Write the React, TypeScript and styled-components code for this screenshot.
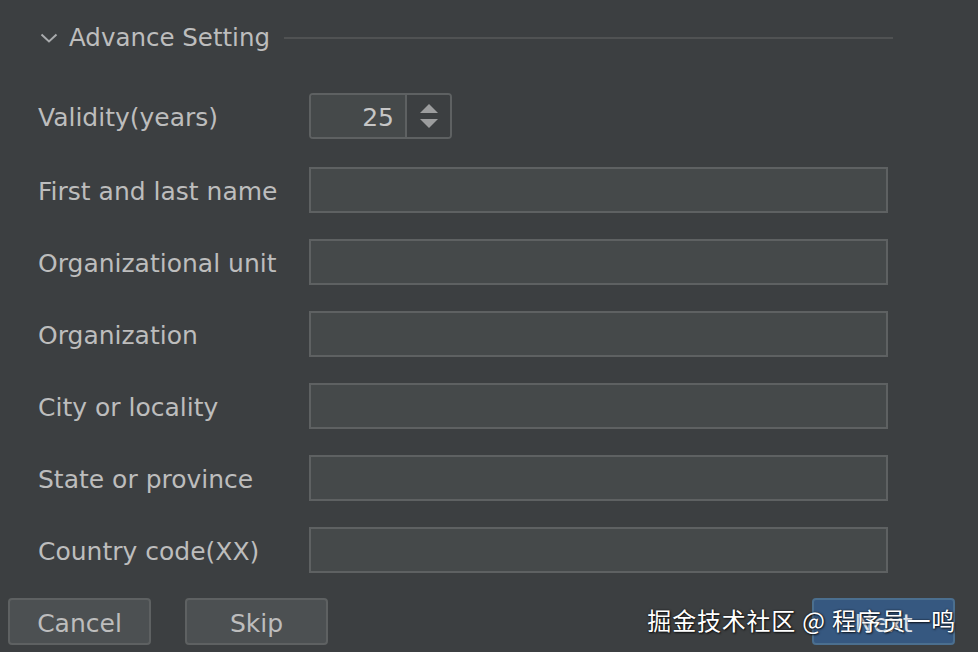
import React from 'react';
import styled, { createGlobalStyle } from 'styled-components';

const GlobalStyle = createGlobalStyle`
	html, body {
		margin: 0;
		padding: 0;
		background: #3c3f41;
	}
	* {
		box-sizing: border-box;
	}
`;

// Styled components
const Page = styled.div`
	position: relative;
	width: 978px;
	height: 652px;
	overflow: hidden;
	background: #3c3f41;
	font-family: 'DejaVu Sans', 'Liberation Sans', sans-serif;
	font-size: 25px;
	color: #bdbdbd;
	display: flex;
	flex-direction: column;
	padding: 17px 0 0 8px;
`;

const SectionHeader = styled.div`
	height: 40px;
	display: flex;
	align-items: center;
	padding-left: 32px;
	width: 885px;
`;

const Chevron = styled.svg`
	width: 18px;
	height: 10px;
	margin-right: 11px;
	margin-top: 2px;
	flex-shrink: 0;
`;

const HeaderTitle = styled.span`
	font-size: 24.5px;
	white-space: nowrap;
	margin-right: 14px;
`;

const HeaderLine = styled.div`
	flex: 1;
	height: 2px;
	background: #505253;
	margin-top: 1px;
`;

const Form = styled.div`
	margin-top: 36px;
	padding-left: 30px;
	display: flex;
	flex-direction: column;
	gap: 26px;
`;

const Row = styled.div<{ $first?: boolean }>`
	display: grid;
	grid-template-columns: 271px 579px;
	grid-template-rows: 46px;
	align-items: center;
	height: 46px;
	margin-bottom: ${(p) => (p.$first ? '2px' : '0')};
`;

const Label = styled.label`
	white-space: nowrap;
	line-height: 42px;
	padding-top: 4px;
`;

const TextField = styled.div`
	height: 46px;
	background: #45494a;
	border: 2px solid #5e6162;
`;

const Spinner = styled.div`
	width: 143px;
	height: 46px;
	display: flex;
	border: 2px solid #5e6162;
	border-radius: 4px;
	overflow: hidden;
`;

const SpinnerValue = styled.div`
	width: 96px;
	background: #45494a;
	border-right: 2px solid #5e6162;
	text-align: right;
	padding: 3px 11px 0 0;
	line-height: 39px;
	color: #c6c6c6;
`;

const SpinnerArrows = styled.div`
	flex: 1;
	display: flex;
	flex-direction: column;
	align-items: center;
	justify-content: center;
	gap: 6px;
	background: #3c3f41;
`;

const Footer = styled.div`
	margin-top: 25px;
	display: flex;
	align-items: center;
	width: 947px;
`;

const Button = styled.button<{ $primary?: boolean }>`
	width: 143px;
	height: 47px;
	border-radius: 4px;
	border: 2px solid ${(p) => (p.$primary ? '#4b6f8f' : '#5e6162')};
	background: ${(p) => (p.$primary ? '#365880' : '#4c5052')};
	color: ${(p) => (p.$primary ? '#dfe4ea' : '#bdbdbd')};
	font-family: inherit;
	font-size: 25px;
	padding: 3px 0 0;
	margin-right: 34px;
	&:last-child {
		margin-left: auto;
		margin-right: 0;
	}
`;

const Watermark = styled.div`
	position: absolute;
	right: 22px;
	top: 602px;
	font-family: 'Noto Sans CJK SC', 'DejaVu Sans', sans-serif;
	font-size: 24px;
	color: #ffffff;
	letter-spacing: 0.8px;
	text-shadow: 0 0 2px rgba(0, 0, 0, 0.8), 1px 1px 2px rgba(0, 0, 0, 0.7);
	white-space: nowrap;
`;

const fields = [
	'First and last name',
	'Organizational unit',
	'Organization',
	'City or locality',
	'State or province',
	'Country code(XX)',
];

const App: React.FC = () => {
	return (
		<Page>
			<GlobalStyle />
			<SectionHeader>
				<Chevron viewBox="0 0 18 10">
					<path d="M1.5 1.5 L9 8.5 L16.5 1.5" fill="none" stroke="#a9abad" strokeWidth="2" />
				</Chevron>
				<HeaderTitle>Advance Setting</HeaderTitle>
				<HeaderLine />
			</SectionHeader>
			<Form>
				<Row $first>
					<Label>Validity(years)</Label>
					<Spinner>
						<SpinnerValue>25</SpinnerValue>
						<SpinnerArrows>
							<svg width="18" height="9" viewBox="0 0 18 9">
								<path d="M9 0 L18 9 L0 9 Z" fill="#9c9d9e" />
							</svg>
							<svg width="18" height="9" viewBox="0 0 18 9">
								<path d="M0 0 L18 0 L9 9 Z" fill="#9c9d9e" />
							</svg>
						</SpinnerArrows>
					</Spinner>
				</Row>
				{fields.map((f) => (
					<Row key={f}>
						<Label>{f}</Label>
						<TextField />
					</Row>
				))}
			</Form>
			<Footer>
				<Button>Cancel</Button>
				<Button>Skip</Button>
				<Button $primary>Next</Button>
			</Footer>
			<Watermark>掘金技术社区 @ 程序员一鸣</Watermark>
		</Page>
	);
};

export default App;
